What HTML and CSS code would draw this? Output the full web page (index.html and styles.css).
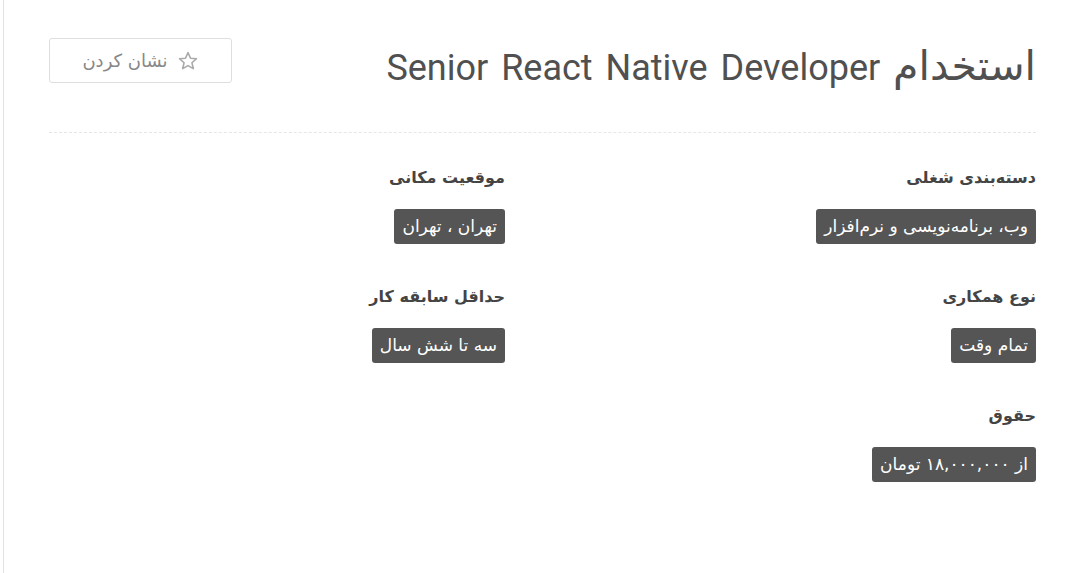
FILE: index.html
```html
<!DOCTYPE html>
<html lang="fa" dir="rtl">
<head>
<meta charset="utf-8">
<link rel="stylesheet" href="styles.css">
</head>
<body>
<div class="page">
  <div class="job">
    <header class="job-head">
      <h1 class="title"><span class="title-fa">استخدام</span> Senior React Native Developer</h1>
      <button class="mark-btn" type="button">
        <svg class="star" viewBox="0 0 24 24" width="22" height="22"><path d="M12 2.8l2.7 6.1 6.6.6-5 4.4 1.5 6.5L12 17l-5.8 3.4 1.5-6.5-5-4.4 6.6-.6z" fill="none" stroke="#aaa" stroke-width="1.7" stroke-linejoin="round"/></svg>
        <span>نشان کردن</span>
      </button>
    </header>
    <div class="info-grid">
      <div class="info">
        <h4 class="info-label">دسته‌بندی شغلی</h4>
        <span class="tag">وب،‌ برنامه‌نویسی و نرم‌افزار</span>
      </div>
      <div class="info">
        <h4 class="info-label">موقعیت مکانی</h4>
        <span class="tag">تهران ، تهران</span>
      </div>
      <div class="info">
        <h4 class="info-label">نوع همکاری</h4>
        <span class="tag">تمام وقت</span>
      </div>
      <div class="info">
        <h4 class="info-label">حداقل سابقه کار</h4>
        <span class="tag">سه تا شش سال</span>
      </div>
      <div class="info">
        <h4 class="info-label">حقوق</h4>
        <span class="tag">از ۱۸,۰۰۰,۰۰۰ تومان</span>
      </div>
    </div>
  </div>
</div>
</body>
</html>
```
FILE: styles.css
```css
html, body {
  margin: 0;
  padding: 0;
  background: #fff;
}
body {
  font-family: "DejaVu Sans", "Noto Sans", sans-serif;
  color: #444;
}
.page {
  margin-left: 3px;
  border-left: 1px solid #e2e2e2;
  min-height: 573px;
  box-sizing: border-box;
  padding: 38px 44px 0 45px;
}
.job-head {
  display: flex;
  flex-direction: row;
  justify-content: space-between;
  align-items: flex-start;
  border-bottom: 1px dashed #e6e6e6;
  padding-bottom: 44px;
}
.title {
  margin: 8px 0 0 0;
  font-family: "Roboto", "DejaVu Sans", sans-serif;
  font-weight: 400;
  font-size: 36px;
  line-height: 40px;
  word-spacing: 4px;
  color: #505050;
}
.title-fa {
  font-family: "DejaVu Sans", sans-serif;
  font-size: 41px;
  word-spacing: 0;
}
.mark-btn {
  display: flex;
  align-items: center;
  justify-content: center;
  gap: 9px;
  width: 183px;
  height: 45px;
  background: #fff;
  border: 1px solid #dedede;
  border-radius: 3px;
  font-family: "DejaVu Sans", sans-serif;
  font-size: 18px;
  color: #888;
  padding: 0;
}
.info-grid {
  display: grid;
  grid-template-columns: 1fr 1fr;
  column-gap: 75px;
  row-gap: 0;
  padding-top: 33px;
}
.info {
  height: 119px;
}
.info-label {
  margin: 0 0 19px 0;
  font-size: 16px;
  font-weight: 700;
  line-height: 24px;
  color: #444;
}
.tag {
  display: inline-block;
  background: #555;
  color: #fff;
  font-size: 17px;
  line-height: 35px;
  height: 35px;
  padding: 0 8px;
  border-radius: 3px;
}
```
